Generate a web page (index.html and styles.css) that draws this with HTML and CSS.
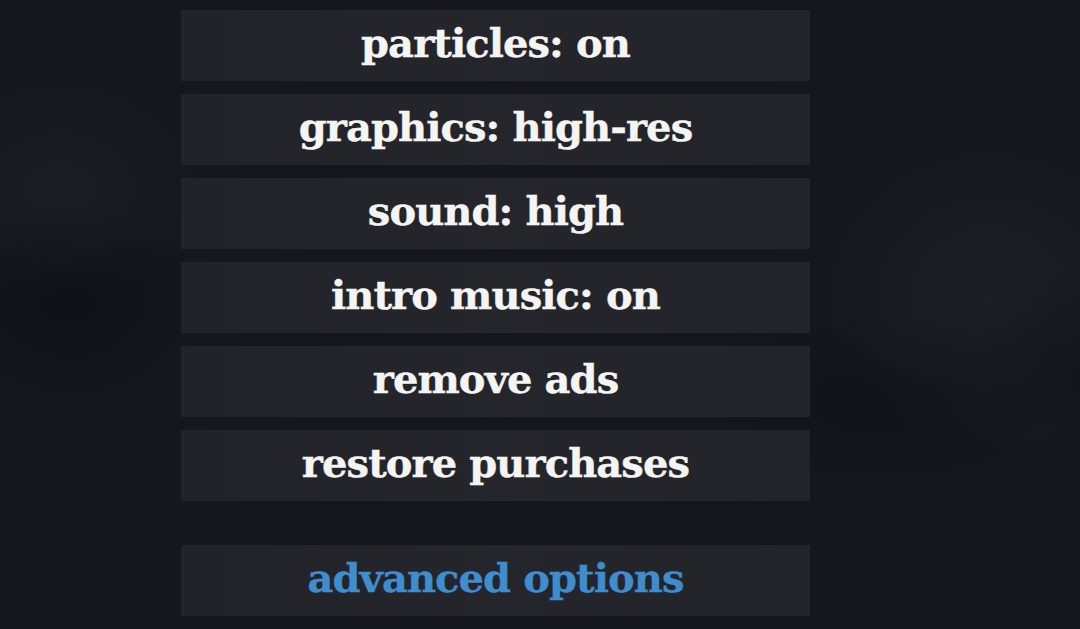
FILE: index.html
```html
<!DOCTYPE html>
<html lang="en">
<head>
<meta charset="utf-8">
<title>Options</title>
<link rel="stylesheet" href="styles.css">
</head>
<body>
<div class="screen">
  <nav class="menu">
    <div class="item">particles: on</div>
    <div class="item">graphics: high-res</div>
    <div class="item">sound: high</div>
    <div class="item">intro music: on</div>
    <div class="item">remove ads</div>
    <div class="item">restore purchases</div>
    <div class="item item-advanced">advanced options</div>
  </nav>
</div>
</body>
</html>
```
FILE: styles.css
```css
html, body {
  margin: 0;
  padding: 0;
}
body {
  width: 1080px;
  height: 629px;
  overflow: hidden;
  background-color: #16171e;
  background-image:
    radial-gradient(ellipse 240px 220px at 990px 300px, rgba(36, 38, 48, 0.45), rgba(36, 38, 48, 0) 70%),
    radial-gradient(ellipse 200px 160px at 60px 190px, rgba(34, 36, 44, 0.4), rgba(34, 36, 44, 0) 70%),
    radial-gradient(ellipse 180px 140px at 70px 300px, rgba(8, 9, 14, 0.45), rgba(8, 9, 14, 0) 70%),
    radial-gradient(ellipse 200px 120px at 1040px 350px, rgba(8, 9, 14, 0.35), rgba(8, 9, 14, 0) 70%),
    radial-gradient(ellipse 260px 120px at 880px 400px, rgba(8, 9, 14, 0.3), rgba(8, 9, 14, 0) 70%);
  font-family: "DejaVu Serif", "Liberation Serif", serif;
}
.screen {
  padding-top: 10px;
  padding-left: 181px;
}
.menu {
  width: 629px;
  display: flex;
  flex-direction: column;
  gap: 13px;
}
.item {
  height: 71px;
  display: flex;
  align-items: center;
  justify-content: center;
  background: linear-gradient(90deg, #222328 0%, #25262b 50%, #232429 100%);
  color: #f4f4f2;
  font-weight: bold;
  font-size: 40px;
  letter-spacing: -0.9px;
  -webkit-text-stroke: 0.4px currentColor;
  padding-bottom: 7px;
  box-sizing: border-box;
}
.item-advanced {
  margin-top: 31px;
  color: #3f8ccf;
}
```
